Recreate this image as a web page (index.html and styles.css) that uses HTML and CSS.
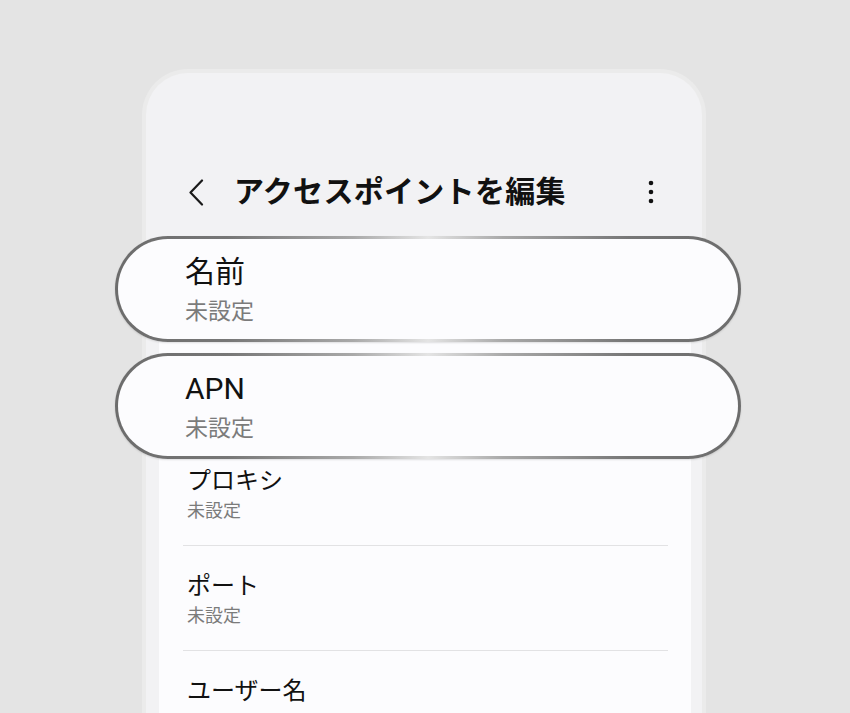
FILE: index.html
```html
<!DOCTYPE html>
<html lang="ja">
<head>
<meta charset="utf-8">
<title>アクセスポイントを編集</title>
<link rel="stylesheet" href="styles.css">
</head>
<body>
<div class="stage">
  <div class="phone">
    <div class="appbar">
      <svg class="back" width="16" height="27" viewBox="0 0 16 27"><polyline points="14,1.5 2.5,13.5 14,25.5" fill="none" stroke="#1a1a1a" stroke-width="2.2" stroke-linecap="round" stroke-linejoin="round"/></svg>
      <h1 class="title">アクセスポイントを編集</h1>
      <svg class="more" width="8" height="26" viewBox="0 0 8 26"><circle cx="4" cy="4" r="2.3" fill="#111"/><circle cx="4" cy="13" r="2.3" fill="#111"/><circle cx="4" cy="22" r="2.3" fill="#111"/></svg>
    </div>
    <div class="card">
      <div class="item first placeholder"></div>
      <div class="item placeholder"></div>
      <div class="item"><div class="item-title">プロキシ</div><div class="item-sub">未設定</div></div>
      <div class="item"><div class="item-title">ポート</div><div class="item-sub">未設定</div></div>
      <div class="item"><div class="item-title">ユーザー名</div></div>
    </div>
  </div>
  <div class="callout callout-name">
    <div class="callout-title">名前</div>
    <div class="callout-sub">未設定</div>
  </div>
  <div class="callout callout-apn">
    <div class="callout-title">APN</div>
    <div class="callout-sub">未設定</div>
  </div>
</div>
</body>
</html>
```
FILE: styles.css
```css
html, body {
  margin: 0;
  padding: 0;
}
body {
  background: #e4e4e4;
  font-family: "Roboto", "Noto Sans CJK JP", sans-serif;
  color: #111;
}
.stage {
  position: relative;
  width: 850px;
  height: 713px;
  overflow: hidden;
}
.phone {
  box-sizing: border-box;
  margin: 69px 0 0 142px;
  width: 564px;
  height: 700px;
  border: 4px solid #ebebeb;
  border-bottom: none;
  border-radius: 46px 46px 0 0;
  background: #f2f2f4;
  padding: 0 11px 0 13px;
  display: flex;
  flex-direction: column;
}
.appbar {
  margin-top: 91px;
  height: 56px;
  display: flex;
  align-items: center;
}
.back {
  margin-left: 29px;
  flex: none;
}
.title {
  margin: 0 0 0 30px;
  font-size: 30px;
  line-height: 30px;
  font-weight: 700;
  letter-spacing: 0.3px;
  color: #111;
}
.more {
  margin-left: auto;
  margin-right: 36px;
  flex: none;
}
.card {
  margin-top: 16px;
  flex: 1;
  background: #fcfcfe;
  border-radius: 26px 26px 0 0;
}
.item {
  box-sizing: border-box;
  height: 105px;
  margin: 0 23px 0 24px;
  padding: 28px 0 0 4px;
  border-bottom: 1px solid #e2e2e4;
}
.item.first {
  height: 100px;
}
.item-title {
  font-size: 24px;
  line-height: 24px;
  color: #111;
}
.item-sub {
  margin-top: 9px;
  font-size: 18px;
  line-height: 18px;
  color: #7b7b7b;
}
.callout {
  position: absolute;
  left: 115px;
  width: 626px;
  height: 106px;
  box-sizing: border-box;
  border: 3px solid transparent;
  border-radius: 53px;
  background:
    linear-gradient(#fcfcfe, #fcfcfe) padding-box,
    linear-gradient(90deg, #6c6c6c 0%, #777 18%, #a9a9a9 38%, #e4e4e4 50%, #a9a9a9 62%, #777 82%, #6c6c6c 100%) border-box;
  padding: 18px 0 0 67px;
  box-shadow: 0 1px 2px rgba(0, 0, 0, 0.12);
}
.callout-name {
  top: 236px;
}
.callout-apn {
  top: 353px;
}
.callout-title {
  font-size: 30px;
  line-height: 30px;
  color: #111;
}
.callout-sub {
  margin-top: 13px;
  font-size: 23px;
  line-height: 23px;
  color: #7b7b7b;
}
```
